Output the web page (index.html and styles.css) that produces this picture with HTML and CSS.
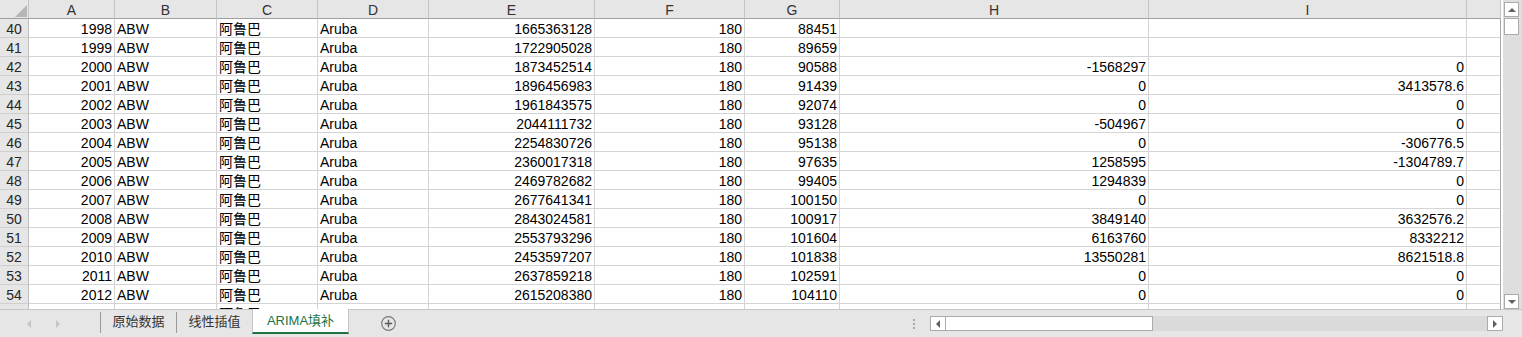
FILE: index.html
```html
<!DOCTYPE html>
<html>
<head lang="zh">
    <meta charset="UTF-8">
    <title>ARIMA填补</title>
    <link rel="stylesheet" href="styles.css">
</head>
<body>

<div class="main">
    <div class="sheet">
        <div class="row head">
            <div class="corner"><span class="tri"></span></div>
            <div>A</div><div>B</div><div>C</div><div>D</div><div>E</div>
            <div>F</div><div>G</div><div>H</div><div>I</div><div></div>
        </div>
        <div class="row"><div class="rh">40</div><div class="n">1998</div><div>ABW</div><div>阿鲁巴</div><div>Aruba</div><div class="n">1665363128</div><div class="n">180</div><div class="n">88451</div><div class="n"></div><div class="n"></div><div></div></div>
        <div class="row"><div class="rh">41</div><div class="n">1999</div><div>ABW</div><div>阿鲁巴</div><div>Aruba</div><div class="n">1722905028</div><div class="n">180</div><div class="n">89659</div><div class="n"></div><div class="n"></div><div></div></div>
        <div class="row"><div class="rh">42</div><div class="n">2000</div><div>ABW</div><div>阿鲁巴</div><div>Aruba</div><div class="n">1873452514</div><div class="n">180</div><div class="n">90588</div><div class="n">-1568297</div><div class="n">0</div><div></div></div>
        <div class="row"><div class="rh">43</div><div class="n">2001</div><div>ABW</div><div>阿鲁巴</div><div>Aruba</div><div class="n">1896456983</div><div class="n">180</div><div class="n">91439</div><div class="n">0</div><div class="n">3413578.6</div><div></div></div>
        <div class="row"><div class="rh">44</div><div class="n">2002</div><div>ABW</div><div>阿鲁巴</div><div>Aruba</div><div class="n">1961843575</div><div class="n">180</div><div class="n">92074</div><div class="n">0</div><div class="n">0</div><div></div></div>
        <div class="row"><div class="rh">45</div><div class="n">2003</div><div>ABW</div><div>阿鲁巴</div><div>Aruba</div><div class="n">2044111732</div><div class="n">180</div><div class="n">93128</div><div class="n">-504967</div><div class="n">0</div><div></div></div>
        <div class="row"><div class="rh">46</div><div class="n">2004</div><div>ABW</div><div>阿鲁巴</div><div>Aruba</div><div class="n">2254830726</div><div class="n">180</div><div class="n">95138</div><div class="n">0</div><div class="n">-306776.5</div><div></div></div>
        <div class="row"><div class="rh">47</div><div class="n">2005</div><div>ABW</div><div>阿鲁巴</div><div>Aruba</div><div class="n">2360017318</div><div class="n">180</div><div class="n">97635</div><div class="n">1258595</div><div class="n">-1304789.7</div><div></div></div>
        <div class="row"><div class="rh">48</div><div class="n">2006</div><div>ABW</div><div>阿鲁巴</div><div>Aruba</div><div class="n">2469782682</div><div class="n">180</div><div class="n">99405</div><div class="n">1294839</div><div class="n">0</div><div></div></div>
        <div class="row"><div class="rh">49</div><div class="n">2007</div><div>ABW</div><div>阿鲁巴</div><div>Aruba</div><div class="n">2677641341</div><div class="n">180</div><div class="n">100150</div><div class="n">0</div><div class="n">0</div><div></div></div>
        <div class="row"><div class="rh">50</div><div class="n">2008</div><div>ABW</div><div>阿鲁巴</div><div>Aruba</div><div class="n">2843024581</div><div class="n">180</div><div class="n">100917</div><div class="n">3849140</div><div class="n">3632576.2</div><div></div></div>
        <div class="row"><div class="rh">51</div><div class="n">2009</div><div>ABW</div><div>阿鲁巴</div><div>Aruba</div><div class="n">2553793296</div><div class="n">180</div><div class="n">101604</div><div class="n">6163760</div><div class="n">8332212</div><div></div></div>
        <div class="row"><div class="rh">52</div><div class="n">2010</div><div>ABW</div><div>阿鲁巴</div><div>Aruba</div><div class="n">2453597207</div><div class="n">180</div><div class="n">101838</div><div class="n">13550281</div><div class="n">8621518.8</div><div></div></div>
        <div class="row"><div class="rh">53</div><div class="n">2011</div><div>ABW</div><div>阿鲁巴</div><div>Aruba</div><div class="n">2637859218</div><div class="n">180</div><div class="n">102591</div><div class="n">0</div><div class="n">0</div><div></div></div>
        <div class="row"><div class="rh">54</div><div class="n">2012</div><div>ABW</div><div>阿鲁巴</div><div>Aruba</div><div class="n">2615208380</div><div class="n">180</div><div class="n">104110</div><div class="n">0</div><div class="n">0</div><div></div></div>
        <!-- next row is only a few pixels tall on screen -->
        <div class="row"><div class="rh"></div><div class="n"></div><div></div><div>阿鲁巴</div><div></div><div class="n"></div><div class="n"></div><div class="n"></div><div class="n"></div><div class="n"></div><div></div></div>
    </div>
    <div class="vscroll">
        <div class="sbtn"><span class="arr-up"></span></div>
        <div class="vthumb"></div>
        <div class="sbtn down"><span class="arr-down"></span></div>
    </div>
</div>

<div class="tabs">
    <div class="nav">
        <span class="nav-left"></span>
        <span class="nav-right"></span>
    </div>
    <div class="sep"></div>
    <div class="tab">原始数据</div>
    <div class="sep"></div>
    <div class="tab">线性插值</div>
    <div class="tab active">ARIMA填补</div>
    <svg class="add" width="15" height="15" viewBox="0 0 15 15">
        <circle cx="7.5" cy="7.5" r="6.8" fill="none" stroke="#7a7a7a" stroke-width="1.2"/>
        <path d="M7.5 3.8v7.4M3.8 7.5h7.4" stroke="#5a5a5a" stroke-width="1.4"/>
    </svg>
    <div class="hbar">
        <div class="dots"><i></i><i></i><i></i></div>
        <div class="hscroll">
            <div class="hbtn"><span class="arr-left"></span></div>
            <div class="hthumb"></div>
            <div class="htrack"></div>
            <div class="hbtn"><span class="arr-right"></span></div>
        </div>
    </div>
</div>

</body>
</html>
```

FILE: styles.css
```css
* {
    box-sizing: border-box;
}
body {
    margin: 0;
    width: 1522px;
    height: 337px;
    overflow: hidden;
    background-color: #fff;
    font-family: "Liberation Sans", "Noto Sans CJK SC", sans-serif;
    font-size: 14px;
    color: #000;
}
.main {
    display: flex;
    height: 309px;
}
.sheet {
    width: 1501px;
    height: 309px;
    overflow: hidden;
}
.row {
    display: grid;
    grid-template-columns: 29px 86px 102px 101px 111px 166px 150px 95px 309px 318px 34px;
}
.row > div {
    height: 19px;
    line-height: 20px;
    padding: 0 2px;
    border-right: 1px solid #d4d4d4;
    border-bottom: 1px solid #d4d4d4;
    overflow: hidden;
    white-space: nowrap;
}
.row > div:last-child {
    border-right-color: #a6a6a6;
}
.row > .n {
    text-align: right;
}
.row > .rh {
    background-color: #e6e6e6;
    color: #262626;
    text-align: center;
    padding: 0;
    border-right-color: #bdbdbd;
    border-bottom-color: #cfcfcf;
}
.head > div {
    background-color: #e6e6e6;
    color: #333;
    text-align: center;
    border-right-color: #c4c4c4;
    border-bottom-color: #9f9f9f;
}
.head > div:last-child {
    border-right-color: #c4c4c4;
}
.head > .corner {
    position: relative;
}
.tri {
    position: absolute;
    right: 1px;
    bottom: 1px;
    width: 0;
    height: 0;
    border-left: 12px solid transparent;
    border-bottom: 12px solid #b5b5b5;
}

/* vertical scroll bar */
.vscroll {
    width: 19px;
    margin-left: 2px;
    background-color: #dedede;
    display: flex;
    flex-direction: column;
    padding: 2px 3px 0 1px;
}
.sbtn {
    height: 15px;
    background-color: #fff;
    border: 1px solid #ababab;
    display: flex;
    align-items: center;
    justify-content: center;
}
.sbtn.down {
    margin-top: auto;
}
.vthumb {
    height: 17px;
    margin-top: 1px;
    background-color: #fff;
    border: 1px solid #ababab;
}
.arr-up,.arr-down,.arr-left,.arr-right {
    display: block;
    width: 0;
    height: 0;
}
.arr-up {
    border-left: 4px solid transparent;
    border-right: 4px solid transparent;
    border-bottom: 4px solid #606060;
}
.arr-down {
    border-left: 4px solid transparent;
    border-right: 4px solid transparent;
    border-top: 4px solid #606060;
}
.arr-left {
    border-top: 4px solid transparent;
    border-bottom: 4px solid transparent;
    border-right: 4px solid #606060;
}
.arr-right {
    border-top: 4px solid transparent;
    border-bottom: 4px solid transparent;
    border-left: 4px solid #606060;
}

/* sheet tabs */
.tabs {
    display: flex;
    align-items: center;
    height: 28px;
    border-top: 1px solid #c6c6c6;
    background-color: #e6e6e6;
    font-size: 13px;
}
.nav {
    width: 100px;
    display: flex;
    align-items: center;
    padding-left: 27px;
}
.nav-left,.nav-right {
    display: block;
    width: 0;
    height: 0;
    border-top: 4px solid transparent;
    border-bottom: 4px solid transparent;
}
.nav-left {
    border-right: 4px solid #c4c4c4;
}
.nav-right {
    margin-left: 25px;
    border-left: 4px solid #c4c4c4;
}
.sep {
    width: 1px;
    height: 21px;
    align-self: flex-start;
    margin-top: 2px;
    background-color: #9a9a9a;
}
.tab {
    width: 75px;
    height: 23px;
    line-height: 23px;
    align-self: flex-start;
    text-align: center;
    color: #333;
}
.tab.active {
    width: 97px;
    height: 25px;
    margin-top: -1px;
    background-color: #fff;
    color: #217346;
    border-left: 1px solid #c6c6c6;
    border-right: 1px solid #c6c6c6;
    border-bottom: 2px solid #217346;
}
.add {
    margin-left: 32px;
}
.hbar {
    margin-left: auto;
    margin-right: 19px;
    display: flex;
    align-items: center;
}
.dots {
    display: flex;
    flex-direction: column;
    width: 2px;
    margin-right: 15px;
}
.dots i {
    display: block;
    width: 2px;
    height: 2px;
    margin: 1px 0;
    background-color: #a8a8a8;
}
.hscroll {
    width: 573px;
    height: 15px;
    display: flex;
}
.hbtn {
    width: 16px;
    height: 15px;
    background-color: #fff;
    border: 1px solid #ababab;
    display: flex;
    align-items: center;
    justify-content: center;
}
.hthumb {
    width: 207px;
    background-color: #fff;
    border: 1px solid #ababab;
    border-left: none;
}
.htrack {
    flex: 1;
    background-color: #dadada;
}
```
